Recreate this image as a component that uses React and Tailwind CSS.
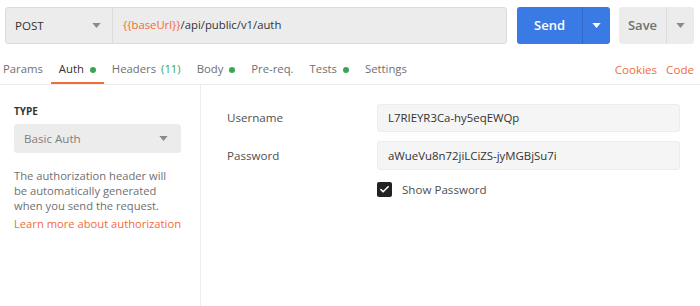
import { Check } from "lucide-react";

const Caret = ({ className }) => (
  <svg width="9" height="5" viewBox="0 0 10 6" className={className}>
    <path d="M0 0h10L5 6z" fill="currentColor" />
  </svg>
);

const Dot = () => <span className="ml-[6px] inline-block w-[6px] h-[6px] rounded-full bg-[#3aa655]" />;

const tabs = [
  { label: "Params" },
  { label: "Auth", dot: true, active: true },
  { label: "Headers", count: "(11)" },
  { label: "Body", dot: true },
  { label: "Pre-req." },
  { label: "Tests", dot: true },
  { label: "Settings" },
];

export default function App() {
  return (
    <div
      className="w-[700px] h-[306px] bg-white overflow-hidden flex flex-col text-[11.6px] text-[#505050]"
      style={{ fontFamily: '"Open Sans", "Noto Sans", sans-serif' }}
    >
      {/* Request bar */}
      <div className="flex items-center h-[37px] mt-[7px] pl-[5px] pr-[6px]">
        <div className="flex h-full w-[502px] rounded-[3px] border border-[#dcdcdc] bg-[#ececec]">
          <div className="w-[107px] flex items-center justify-between pl-[9px] pr-[11px] border-r border-[#dcdcdc]">
            <span className="text-[#333]">POST</span>
            <Caret className="text-[#8a8a8a]" />
          </div>
          <div className="flex items-center pl-[10px] text-[#333] text-[11.3px]">
            <span className="text-[#f26b3a]">{"{{baseUrl}}"}</span>
            <span>/api/public/v1/auth</span>
          </div>
        </div>
        <div className="ml-[10px] flex h-full w-[93px] rounded-[3px] bg-[#3a7ae4] text-white">
          <div className="w-[65px] flex items-center justify-center font-semibold text-[13px]">Send</div>
          <div className="flex-1 flex items-center justify-center border-l border-[#2f68c8]">
            <Caret />
          </div>
        </div>
        <div className="ml-[9px] flex h-full w-[75px] rounded-[3px] bg-[#ececec] text-[#707070]">
          <div className="w-[47px] flex items-center justify-center font-semibold text-[13px]">Save</div>
          <div className="flex-1 flex items-center justify-center border-l border-[#dcdcdc]">
            <Caret className="text-[#8a8a8a]" />
          </div>
        </div>
      </div>

      {/* Tabs */}
      <div className="flex items-stretch h-[41px] border-b border-[#ececec] pl-[3px] pr-[6px] text-[11.3px]">
        {tabs.map((t, i) => (
          <div
            key={t.label}
            className={`relative flex items-center pt-[11px] ${i === 0 ? "pr-[8px]" : "px-[8px]"} ${
              t.active ? "text-[#333]" : "text-[#707070]"
            }`}
          >
            <span>{t.label}</span>
            {t.count && <span className="ml-[5px] text-[#3aa655]">{t.count}</span>}
            {t.dot && <Dot />}
            {t.active && <span className="absolute left-0 right-0 bottom-0 h-[2px] bg-[#f26b3a]" />}
          </div>
        ))}
        <div className="ml-auto flex items-center pt-[11px] gap-[9px] text-[#f26b3a] text-[11.6px]">
          <span>Cookies</span>
          <span>Code</span>
        </div>
      </div>

      {/* Body */}
      <div className="flex flex-1">
        <div className="w-[201px] border-r border-[#ececec] pl-[14px] pr-[19px] pt-[20px]">
          <div className="text-[10px] font-bold text-[#333] leading-[13px]">TYPE</div>
          <div className="mt-[6px] h-[29px] rounded-[3px] bg-[#ececec] flex items-center justify-between pl-[10px] pr-[13px] text-[#808080]">
            <span>Basic Auth</span>
            <Caret className="text-[#8a8a8a]" />
          </div>
          <div className="pr-[1px]">
            <p className="mt-[15px] text-[11.2px] leading-[15px] text-[#707070]">
              The authorization header will be automatically generated when you send the request.
            </p>
            <p className="mt-[3px] text-[11.2px] leading-[15px] text-[#f26b3a] whitespace-nowrap">
              Learn more about authorization
            </p>
          </div>
        </div>
        <div className="flex-1 pl-[26px] pr-[20px] pt-[19px]">
          <div className="flex items-center h-[28px]">
            <div className="w-[150px] text-[#505050]">Username</div>
            <div className="flex-1 h-full rounded-[3px] bg-[#f5f5f5] border border-[#ececec] flex items-center pl-[10px] text-[#333] text-[11.4px]">
              L7RIEYR3Ca-hy5eqEWQp
            </div>
          </div>
          <div className="flex items-center h-[29px] mt-[9px]">
            <div className="w-[150px] text-[#505050]">Password</div>
            <div className="flex-1 h-full rounded-[3px] bg-[#f5f5f5] border border-[#ececec] flex items-center pl-[10px] text-[#333] text-[11.4px]">
              aWueVu8n72jiLCiZS-jyMGBjSu7i
            </div>
          </div>
          <div className="flex items-center mt-[11px] ml-[150px]">
            <span className="w-[15px] h-[15px] rounded-[2px] bg-[#222] flex items-center justify-center">
              <Check size={11} strokeWidth={3.5} className="text-white" />
            </span>
            <span className="ml-[10px] text-[#505050]">Show Password</span>
          </div>
        </div>
      </div>
    </div>
  );
}
